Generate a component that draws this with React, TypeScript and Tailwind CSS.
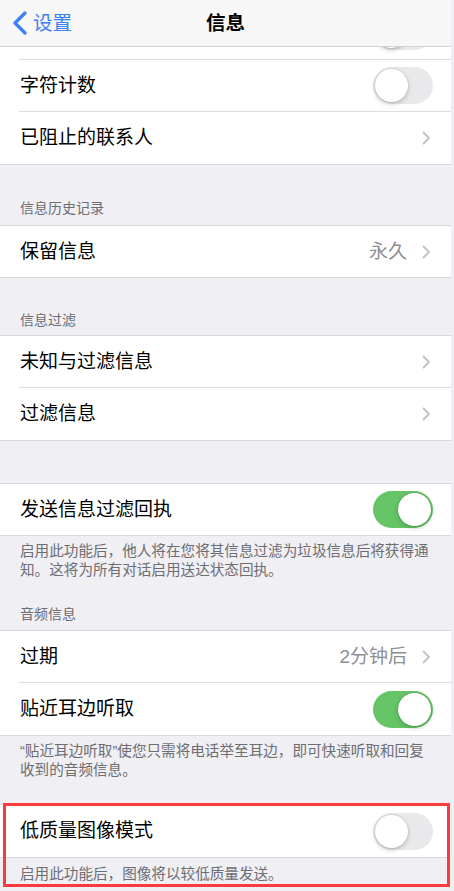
import type { ReactNode } from "react";

const font = { fontFamily: '"Liberation Sans", "Noto Sans CJK SC", sans-serif' };

const Toggle = ({ on }: { on?: boolean }) => (
  <div
    className={`flex h-[37px] w-[60px] shrink-0 items-center rounded-full p-[2px] ${
      on ? "justify-end bg-[#64c466]" : "justify-start bg-[#e9e9eb]"
    }`}
  >
    <span className="block h-[33px] w-[33px] rounded-full bg-white shadow-[0_2px_5px_rgba(0,0,0,0.2),0_0_0_1px_rgba(0,0,0,0.05)]" />
  </div>
);

const Chevron = () => (
  <svg width="9" height="14" viewBox="0 0 9 14" className="shrink-0">
    <path d="M1.5 1.5 7 7l-5.5 5.5" fill="none" stroke="#c4c4c8" strokeWidth="2" strokeLinecap="round" strokeLinejoin="round" />
  </svg>
);

type RowProps = {
  label: string;
  value?: string;
  chevron?: boolean;
  toggle?: "on" | "off";
  sep?: boolean;
  h?: string;
};

const Row = ({ label, value, chevron, toggle, sep, h = "h-[52px]" }: RowProps) => (
  <div className={`flex ${h} bg-white pl-[19px]`}>
    <div
      className={`flex flex-1 items-center ${toggle ? "pr-[18px]" : "pr-[20px]"} ${
        sep ? "border-b border-[#dcdce0]" : ""
      }`}
    >
      <span className="pl-[1px] text-[19px] leading-[24px] text-black">{label}</span>
      <div className="ml-auto flex items-center gap-[15px]">
        {value && <span className="text-[19px] leading-[24px] text-[#8e8e93]">{value}</span>}
        {chevron && <Chevron />}
        {toggle && <Toggle on={toggle === "on"} />}
      </div>
    </div>
  </div>
);

const Group = ({ children }: { children: ReactNode }) => (
  <div className="border-y border-[#d8d8dc] bg-white">{children}</div>
);

const Header = ({ children, cls }: { children: ReactNode; cls: string }) => (
  <div className={`flex items-end pl-[20px] text-[14px] leading-[20px] text-[#6d6d72] ${cls}`}>
    {children}
  </div>
);

const Note = ({ children, cls = "" }: { children: ReactNode; cls?: string }) => (
  <div className={`pl-[20px] pr-[14px] pt-[6px] text-[14.6px] leading-[19px] text-[#6d6d72] ${cls}`}>
    {children}
  </div>
);

export default function App() {
  return (
    <div className="min-h-[891px] w-[454px] bg-[#efeff4]" style={font}>
      <div className="w-[451px]">
        {/* navigation bar */}
        <div className="relative flex h-[47px] items-center border-b border-[#d3d3d6] bg-[#f7f7f7]">
          <div className="flex items-center pl-[12px]">
            <svg width="16" height="24" viewBox="0 0 16 24">
              <path d="M13 2 3 12l10 10" fill="none" stroke="#3d80f4" strokeWidth="3.2" strokeLinecap="round" strokeLinejoin="round" />
            </svg>
            <span className="ml-[5px] text-[19.5px] leading-[24px] text-[#3d80f4]">设置</span>
          </div>
          <span className="absolute left-1/2 -translate-x-1/2 text-[19.5px] font-semibold leading-[24px] text-black">
            信息
          </span>
        </div>

        {/* row scrolled under the bar */}
        <div className="flex h-[13px] overflow-hidden bg-white pl-[19px]">
          <div className="flex flex-1 items-start justify-end border-b border-[#dcdce0] pr-[18px]">
            <div className="-mt-[34px]">
              <Toggle />
            </div>
          </div>
        </div>
        <div className="border-b border-[#d8d8dc] bg-white">
          <Row label="字符计数" toggle="off" sep />
          <Row label="已阻止的联系人" chevron />
        </div>

        <Header cls="h-[60px] pb-[7px]">信息历史记录</Header>
        <Group>
          <Row label="保留信息" value="永久" chevron h="h-[51px]" />
        </Group>

        <Header cls="h-[57px] pb-[5px]">信息过滤</Header>
        <Group>
          <Row label="未知与过滤信息" chevron sep />
          <Row label="过滤信息" chevron />
        </Group>

        <div className="h-[42px]" />
        <Group>
          <Row label="发送信息过滤回执" toggle="on" h="h-[51px]" />
        </Group>
        <Note>
          启用此功能后，他人将在您将其信息过滤为垃圾信息后将获得通
          <br />
          知。这将为所有对话启用送达状态回执。
        </Note>

        <Header cls="pt-[24px] pb-[6px]">音频信息</Header>
        <Group>
          <Row label="过期" value="2分钟后" chevron sep />
          <Row label="贴近耳边听取" toggle="on" />
        </Group>
        <Note>
          “贴近耳边听取”使您只需将电话举至耳边，即可快速听取和回复
          <br />
          收到的音频信息。
        </Note>

        <div className="h-[24px]" />
        <div className="relative">
          <Group>
            <Row label="低质量图像模式" toggle="off" />
          </Group>
          <Note cls="pt-[7px]">启用此功能后，图像将以较低质量发送。</Note>
          {/* highlight frame */}
          <div className="pointer-events-none absolute -top-[1px] left-[3px] right-[1px] h-[84px] border-[3px] border-[#fb3a3f]" />
        </div>
      </div>
    </div>
  );
}
